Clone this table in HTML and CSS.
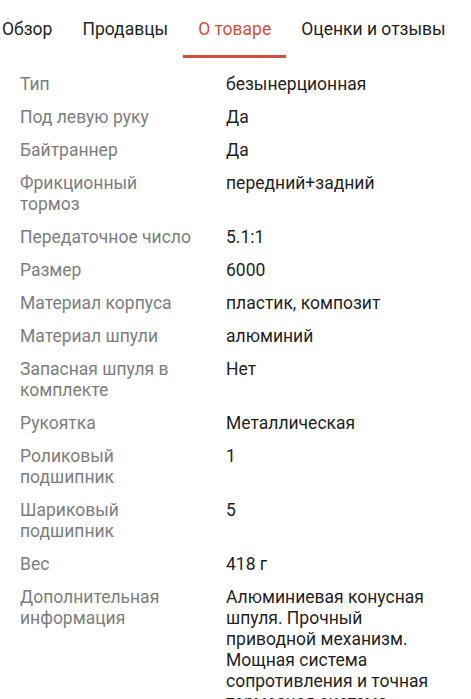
FILE: index.html
```html
<!DOCTYPE html>
<html lang="ru">
<head>
<meta charset="utf-8">
<link rel="stylesheet" href="styles.css">
</head>
<body>
<nav class="tabs">
  <div class="tab">Обзор</div>
  <div class="tab">Продавцы</div>
  <div class="tab active">О товаре</div>
  <div class="tab">Оценки и отзывы</div>
</nav>
<div class="specs">
  <div class="row"><div class="k">Тип</div><div class="v">безынерционная</div></div>
  <div class="row"><div class="k">Под левую руку</div><div class="v">Да</div></div>
  <div class="row"><div class="k">Байтраннер</div><div class="v">Да</div></div>
  <div class="row"><div class="k">Фрикционный тормоз</div><div class="v">передний+задний</div></div>
  <div class="row"><div class="k">Передаточное число</div><div class="v">5.1:1</div></div>
  <div class="row"><div class="k">Размер</div><div class="v">6000</div></div>
  <div class="row"><div class="k">Материал корпуса</div><div class="v">пластик, композит</div></div>
  <div class="row"><div class="k">Материал шпули</div><div class="v">алюминий</div></div>
  <div class="row"><div class="k">Запасная шпуля в комплекте</div><div class="v">Нет</div></div>
  <div class="row"><div class="k">Рукоятка</div><div class="v">Металлическая</div></div>
  <div class="row"><div class="k">Роликовый подшипник</div><div class="v">1</div></div>
  <div class="row"><div class="k">Шариковый подшипник</div><div class="v">5</div></div>
  <div class="row"><div class="k">Вес</div><div class="v">418 г</div></div>
  <div class="row"><div class="k">Дополнительная информация</div><div class="v">Алюминиевая конусная шпуля. Прочный приводной механизм. Мощная система сопротивления и точная тормозная система.</div></div>
</div>
</body>
</html>
```

FILE: styles.css
```css
html, body {
  margin: 0;
  padding: 0;
  background: #fff;
  font-family: Roboto, "Noto Sans", sans-serif;
  overflow: hidden;
}
.tabs {
  display: flex;
  margin-left: -13px;
  height: 58px;
  white-space: nowrap;
}
.tab {
  padding: 0 15px;
  font-size: 17.5px;
  line-height: 58px;
  color: #1f1f1f;
  box-sizing: border-box;
  border-bottom: 3px solid transparent;
}
.tab.active {
  color: #d0503e;
  border-bottom-color: #d0503e;
}
.specs {
  padding: 16px 20px 0 20px;
  display: flex;
  flex-direction: column;
  gap: 12px;
}
.row {
  display: flex;
  gap: 30px;
  font-size: 17.5px;
  line-height: 21px;
}
.k {
  width: 176px;
  flex: none;
  color: #7d7d7d;
}
.v {
  flex: 1;
  color: #1f1f1f;
}
```
